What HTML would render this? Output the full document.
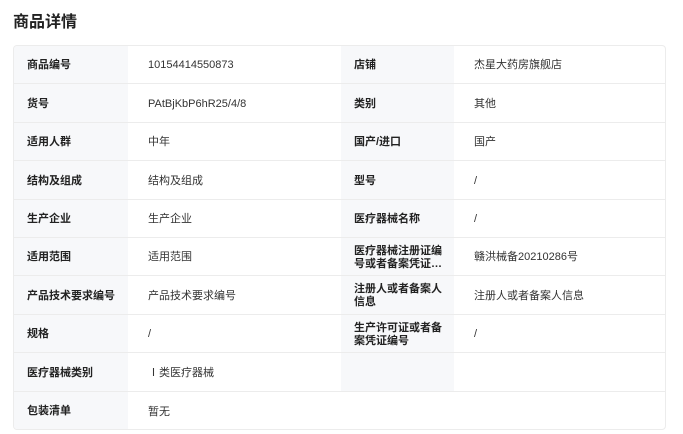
<!DOCTYPE html><html><head><meta charset="utf-8"><style>
*{margin:0;padding:0;box-sizing:border-box}
body{width:683px;height:434px;background:#fff;font-family:"Liberation Sans","Noto Sans CJK SC",sans-serif;position:relative;overflow:hidden}
h1{position:absolute;left:13px;top:8px;font-size:16px;font-weight:bold;color:#222}
.box{position:absolute;left:13px;top:45px;width:653px;height:385px;border:1px solid #ececec;border-radius:4px;overflow:hidden}
.c{position:absolute;display:flex;align-items:center;font-size:11px;line-height:13px;color:#333;border-bottom:1px solid #ececec;padding-top:2px}
.l{background:#f7f8fa;font-weight:bold;color:#222;padding-left:13px;padding-right:6px}
.v{padding-left:20px}
</style></head><body>
<h1>商品详情</h1>
<div class="box" id="b"></div>
<script>
var rows=[["商品编号","10154414550873","店铺","杰星大药房旗舰店"],["货号","PAtBjKbP6hR25/4/8","类别","其他"],["适用人群","中年","国产/进口","国产"],["结构及组成","结构及组成","型号","/"],["生产企业","生产企业","医疗器械名称","/"],["适用范围","适用范围","医疗器械注册证编号或者备案凭证…","赣洪械备20210286号"],["产品技术要求编号","产品技术要求编号","注册人或者备案人信息","注册人或者备案人信息"],["规格","/","生产许可证或者备案凭证编号","/"],["医疗器械类别","Ⅰ类医疗器械","",""],["包装清单","暂无",null,null]];
var h="",y=0;
rows.forEach(function(r,i){var hh=38.4,t=Math.round(y),H=Math.round(y+hh)-t;
h+='<div class="c l" style="left:0;top:'+t+'px;width:114px;height:'+H+'px">'+r[0]+'</div>';
if(r[2]===null){h+='<div class="c v" style="left:114px;top:'+t+'px;width:540px;height:'+H+'px;border-bottom:none">'+r[1]+'</div>';}
else{h+='<div class="c v" style="left:114px;top:'+t+'px;width:213px;height:'+H+'px">'+r[1]+'</div>';
h+='<div class="c l" style="left:327px;top:'+t+'px;width:113px;height:'+H+'px">'+r[2]+'</div>';
h+='<div class="c v" style="left:440px;top:'+t+'px;width:213px;height:'+H+'px">'+r[3]+'</div>';}
y+=hh;});
document.getElementById("b").innerHTML=h;
</script>
</body></html>
